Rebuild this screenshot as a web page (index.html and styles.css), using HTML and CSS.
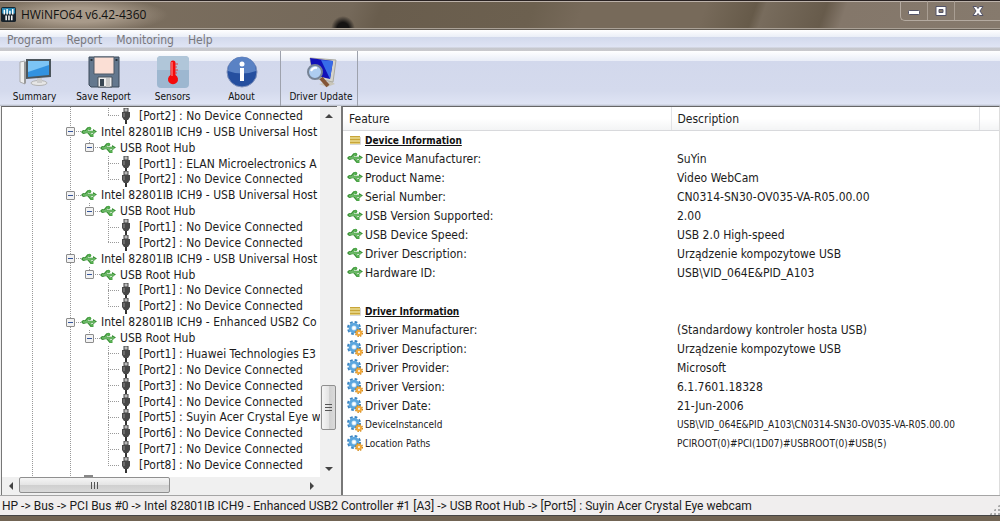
FILE: index.html
```html
<!DOCTYPE html>
<html lang="en">
<head>
    <meta charset="UTF-8">
    <meta name="viewport" content="width=device-width, initial-scale=1.0">
    <title>HWiNFO64 v6.42-4360</title>
    <link rel="stylesheet" href="styles.css">
</head>
<body>
    <!-- Shared icons -->
    <svg class="sprites" aria-hidden="true">
        <symbol id="usb" viewBox="0 0 16 12">
            <path d="M2 6h12M4 6l3-3.500h1.500M7 6l3 3.500h1.500" fill="none" stroke="#3b9137" stroke-width="2.600"/>
            <path d="M0 6l2-2 2.500.5v3L2 8z" fill="#3b9137"/>
            <path d="M12 3l4 2.500L12 8z" fill="#3b9137"/>
            <circle cx="8.500" cy="2.500" r="1.800" fill="#4aa545"/>
            <path d="M9.500 8h3v3h-3z" fill="#4aa545"/>
            <path d="M2 6h12M5 5.500l3-3M8 6.500l3 3" fill="none" stroke="#8ed488" stroke-width="1"/>
        </symbol>
        <symbol id="plug" viewBox="0 0 10 16">
            <path d="M3 0h4v4H3z" fill="#bbb" stroke="#444" stroke-width="1"/>
            <path d="M1 4h8v5l-2 3H3L1 9z" fill="#484848"/>
            <path d="M3 5v4" stroke="#909090"/>
            <path d="M4 12h2v4H4z" fill="#333"/>
        </symbol>
        <symbol id="gears" viewBox="0 0 16 16">
            <circle cx="7" cy="7" r="6" fill="none" stroke="#3c85c2" stroke-width="2" stroke-dasharray="2.700 2"/>
            <circle cx="7" cy="7" r="3.900" fill="#b9dcf5" stroke="#5ba6de" stroke-width="2.800"/>
            <circle cx="7" cy="7" r="1.800" fill="#fff"/>
            <circle cx="12" cy="12" r="3.200" fill="none" stroke="#cf8310" stroke-width="1.600" stroke-dasharray="1.500 1"/>
            <circle cx="12" cy="12" r="2" fill="#fff" stroke="#f2a93a" stroke-width="2"/>
        </symbol>
        <symbol id="list" viewBox="0 0 12 10">
            <path d="M1 1h10v8H1z" fill="#e3cf7c"/>
            <path d="M1 1.500h10M1 4.500h10M1 7.500h10" stroke="#c8a539"/>
            <path d="M1 9.500h10.500V2" fill="none" stroke="#d8d8d8"/>
        </symbol>
    </svg>

    <header class="titlebar">
        <svg class="app-icon" viewBox="0 0 16 16" aria-hidden="true">
            <rect width="16" height="16" rx="2" fill="#17212a"/>
            <path d="M1 1h14v6H1z" fill="#2484b0"/>
            <path d="M3.500 3v5M6.500 2v6M9.500 4v4M12.500 2v6M5.500 9v5M8.500 9v5M11.500 9v5" stroke="#fff" stroke-width="1.600"/>
        </svg>
        <h1>HWiNFO64 v6.42-4360</h1>
        <div class="window-controls">
            <button aria-label="Minimize"><svg viewBox="0 0 12 12"><rect x="0.500" y="5.500" width="11" height="4" rx="1" fill="#fff" stroke="#545468"/></svg></button>
            <button aria-label="Maximize"><svg viewBox="0 0 12 12"><path d="M1 1.500h10v9H1zM4 4.500v3h4v-3z" fill="#fff" fill-rule="evenodd" stroke="#545468"/></svg></button>
            <button class="close" aria-label="Close"><svg viewBox="0 0 12 12"><path d="M1 1.500h3.500L6 3.500l1.500-2H11L8 6l3 4.500H7.500L6 8.500l-1.500 2H1L4 6z" fill="#fff" stroke="#545468"/></svg></button>
        </div>
    </header>

    <nav class="menu">
        <button>Program</button>
        <button>Report</button>
        <button>Monitoring</button>
        <button>Help</button>
    </nav>

    <div class="toolbar">
        <button>
            <svg viewBox="0 0 32 32" aria-hidden="true">
                <path d="M1 6l5-1v23l-5-2z" fill="#eee" stroke="#a9a9a9"/>
                <path d="M5 6h2v21l-2 1z" fill="#999"/>
                <ellipse cx="20" cy="27" rx="8" ry="2.500" fill="#e6e6e6" stroke="#b2b2b2"/>
                <path d="M18 22h5v5h-5z" fill="#ccc"/>
                <path d="M7 3h25v18l-25 2z" fill="#4b555c"/>
                <path d="M9 5h21v14L9 21z" fill="#3292e0"/>
                <path d="M9 5h21v4L9 16z" fill="#7cc4f5"/>
            </svg>
            <span>Summary</span>
        </button>
        <button>
            <svg viewBox="0 0 32 32" aria-hidden="true">
                <path d="M1 1h30v30H3l-2-2z" fill="#64788e" stroke="#3d4b5a"/>
                <path d="M6 1h20v17H6z" fill="#fbdfd5" stroke="#4d5966"/>
                <path d="M2.500 3h2v2h-2zM27.500 3h2v2h-2z" fill="#25303a"/>
                <path d="M10 21h14v10H10z" fill="#eee" stroke="#48525d"/>
                <path d="M12 23h4v7h-4z" fill="#384653"/>
                <path d="M18 22h4v9h-4z" fill="#c8c8c8"/>
            </svg>
            <span>Save Report</span>
        </button>
        <button>
            <svg viewBox="0 0 32 32" aria-hidden="true">
                <rect x="0" y="0" width="32" height="32" rx="4" fill="#9db7d0"/>
                <path d="M0 4q0-4 4-4h24q4 0 4 4v10H0z" fill="#b0c6d9"/>
                <path d="M13.500 7a2.500 2.500 0 0 1 5 0v12a5 5 0 1 1-5 0z" fill="#f50a0a"/>
                <path d="M15 6v14" stroke="#ff9d9d"/>
                <path d="M18 8h3M18 11h2M18 14h3M18 17h2" stroke="#e24040"/>
            </svg>
            <span>Sensors</span>
        </button>
        <button>
            <svg viewBox="0 0 32 32" aria-hidden="true">
                <circle cx="16" cy="16" r="15" fill="#254f9f" stroke="#8193bc"/>
                <path d="M2 15a14 14 0 0 1 28 0q-14 5-28 0z" fill="#5a82c4"/>
                <circle cx="16" cy="8" r="2.500" fill="#fff"/>
                <path d="M14 12h4v13h-4z" fill="#fff"/>
            </svg>
            <span>About</span>
        </button>
        <button class="wide">
            <svg viewBox="0 0 32 32" aria-hidden="true">
                <path d="M26 25l-12 3 8 3 8-3z" fill="#c9c6b9"/>
                <path d="M5 2l26 2-3 22-20-4z" fill="#d5d4cc" stroke="#aaa9a0"/>
                <path d="M5 2l23 3-3 18-17-4z" fill="#1111b8"/>
                <path d="M16 4l12 1-3 18z" fill="#376ce8"/>
                <path d="M16 22l7 8" stroke="#845536" stroke-width="4"/>
                <circle cx="10" cy="16" r="7" fill="#aecdf0" stroke="#768395" stroke-width="2"/>
                <path d="M6 15q2-4 6-3" fill="none" stroke="#fff" stroke-width="2"/>
            </svg>
            <span>Driver Update</span>
        </button>
    </div>

    <main>
        <section class="tree-panel" aria-label="Devices">
            <ul class="tree">
                <li class="port last"><svg><use href="#plug"/></svg>[Port2] : No Device Connected</li>
                <li class="controller"><button aria-label="Collapse"></button><svg><use href="#usb"/></svg>Intel 82801IB ICH9 - USB Universal Host</li>
                <li class="hub"><button aria-label="Collapse"></button><svg><use href="#usb"/></svg>USB Root Hub</li>
                <li class="port"><svg><use href="#plug"/></svg>[Port1] : ELAN Microelectronics A</li>
                <li class="port last"><svg><use href="#plug"/></svg>[Port2] : No Device Connected</li>
                <li class="controller"><button aria-label="Collapse"></button><svg><use href="#usb"/></svg>Intel 82801IB ICH9 - USB Universal Host</li>
                <li class="hub"><button aria-label="Collapse"></button><svg><use href="#usb"/></svg>USB Root Hub</li>
                <li class="port"><svg><use href="#plug"/></svg>[Port1] : No Device Connected</li>
                <li class="port last"><svg><use href="#plug"/></svg>[Port2] : No Device Connected</li>
                <li class="controller"><button aria-label="Collapse"></button><svg><use href="#usb"/></svg>Intel 82801IB ICH9 - USB Universal Host</li>
                <li class="hub"><button aria-label="Collapse"></button><svg><use href="#usb"/></svg>USB Root Hub</li>
                <li class="port"><svg><use href="#plug"/></svg>[Port1] : No Device Connected</li>
                <li class="port last"><svg><use href="#plug"/></svg>[Port2] : No Device Connected</li>
                <li class="controller"><button aria-label="Collapse"></button><svg><use href="#usb"/></svg>Intel 82801IB ICH9 - Enhanced USB2 Co</li>
                <li class="hub"><button aria-label="Collapse"></button><svg><use href="#usb"/></svg>USB Root Hub</li>
                <li class="port"><svg><use href="#plug"/></svg>[Port1] : Huawei Technologies E3</li>
                <li class="port"><svg><use href="#plug"/></svg>[Port2] : No Device Connected</li>
                <li class="port"><svg><use href="#plug"/></svg>[Port3] : No Device Connected</li>
                <li class="port"><svg><use href="#plug"/></svg>[Port4] : No Device Connected</li>
                <li class="port"><svg><use href="#plug"/></svg>[Port5] : Suyin Acer Crystal Eye w</li>
                <li class="port"><svg><use href="#plug"/></svg>[Port6] : No Device Connected</li>
                <li class="port"><svg><use href="#plug"/></svg>[Port7] : No Device Connected</li>
                <li class="port last"><svg><use href="#plug"/></svg>[Port8] : No Device Connected</li>
            </ul>
            <div class="scroll vertical">
                <button class="arrow up" aria-label="Scroll up"></button>
                <div class="track"><div class="thumb"></div></div>
                <button class="arrow down" aria-label="Scroll down"></button>
            </div>
            <div class="scroll horizontal">
                <button class="arrow left" aria-label="Scroll left"></button>
                <div class="track"><div class="thumb"></div></div>
                <button class="arrow right" aria-label="Scroll right"></button>
            </div>
        </section>

        <section class="details" aria-label="Device details">
            <table>
                <thead>
                    <tr><th class="feature">Feature</th><th>Description</th><th class="rest"></th></tr>
                </thead>
                <tbody>
                    <tr class="group"><td><svg><use href="#list"/></svg><span>Device Information</span></td><td></td></tr>
                    <tr><td><svg><use href="#usb"/></svg>Device Manufacturer:</td><td>SuYin</td></tr>
                    <tr><td><svg><use href="#usb"/></svg>Product Name:</td><td>Video WebCam</td></tr>
                    <tr><td><svg><use href="#usb"/></svg>Serial Number:</td><td>CN0314-SN30-OV035-VA-R05.00.00</td></tr>
                    <tr><td><svg><use href="#usb"/></svg>USB Version Supported:</td><td>2.00</td></tr>
                    <tr><td><svg><use href="#usb"/></svg>USB Device Speed:</td><td>USB 2.0 High-speed</td></tr>
                    <tr><td><svg><use href="#usb"/></svg>Driver Description:</td><td>Urządzenie kompozytowe USB</td></tr>
                    <tr><td><svg><use href="#usb"/></svg>Hardware ID:</td><td>USB\VID_064E&amp;PID_A103</td></tr>
                    <tr><td></td><td></td></tr>
                    <tr class="group"><td><svg><use href="#list"/></svg><span>Driver Information</span></td><td></td></tr>
                    <tr><td><svg><use href="#gears"/></svg>Driver Manufacturer:</td><td>(Standardowy kontroler hosta USB)</td></tr>
                    <tr><td><svg><use href="#gears"/></svg>Driver Description:</td><td>Urządzenie kompozytowe USB</td></tr>
                    <tr><td><svg><use href="#gears"/></svg>Driver Provider:</td><td>Microsoft</td></tr>
                    <tr><td><svg><use href="#gears"/></svg>Driver Version:</td><td>6.1.7601.18328</td></tr>
                    <tr><td><svg><use href="#gears"/></svg>Driver Date:</td><td>21-Jun-2006</td></tr>
                    <tr class="small"><td><svg><use href="#gears"/></svg>DeviceInstanceId</td><td>USB\VID_064E&amp;PID_A103\CN0314-SN30-OV035-VA-R05.00.00</td></tr>
                    <tr class="small"><td><svg><use href="#gears"/></svg>Location Paths</td><td>PCIROOT(0)#PCI(1D07)#USBROOT(0)#USB(5)</td></tr>
                </tbody>
            </table>
        </section>
    </main>

    <footer class="statusbar">
        <span>HP -&gt; Bus -&gt; PCI Bus #0 -&gt; Intel 82801IB ICH9 - Enhanced USB2 Controller #1 [A3] -&gt; USB Root Hub -&gt; [Port5] : Suyin Acer Crystal Eye webcam</span>
        <i class="grip"></i>
    </footer>
</body>
</html>
```
FILE: styles.css
```css
* {
    margin: 0;
    padding: 0;
    box-sizing: border-box;
}

body {
    display: flex;
    flex-direction: column;
    height: 100vh;
    overflow: hidden;
    font-family: 'DejaVu Sans Condensed', 'DejaVu Sans', sans-serif;
    font-size: 12px;
    color: #1c1c1c;
    background: #6d6050;
    border-bottom: 5px solid #716453;
}

button {
    border: none;
    background: none;
    font: inherit;
    color: inherit;
}

svg {
    flex: none;
}

.sprites {
    display: none;
}

/* Title bar */
.titlebar {
    flex: none;
    display: flex;
    align-items: center;
    height: 30px;
    padding: 0 0 2px 1px;
    border-top: 1px solid #292222;
    border-bottom: 1px solid #655e55;
    background:
        radial-gradient(ellipse 12px 13px at 343px 28px, #151312 50%, transparent),
        radial-gradient(ellipse 90px 18px at 78px 14px, #a89a8a 40%, transparent),
        linear-gradient(110deg, #7d7060 0%, #75695a 35%, #695d4d 38%, #6c604f 53%, #776a5a 58%, #776a5a 70%, #665a49 75%, #786c5d 76%, #675b4b 82%, #84776a 84%, #867a6d 100%);
    box-shadow: inset 0 1px #bcb2aa, inset 0 -1px #aaa196;
}

.app-icon {
    width: 15px;
    height: 15px;
}

.titlebar h1 {
    margin-left: 5px;
    font: 12px 'Open Sans', sans-serif;
    color: #111;
}

.window-controls {
    display: flex;
    align-self: flex-start;
    margin-left: auto;
    height: 20px;
    border: 1px solid #b4aaa0;
    border-top: none;
    border-right: none;
    border-radius: 0 0 0 5px;
}

.window-controls button {
    display: flex;
    align-items: center;
    justify-content: center;
    width: 27px;
    border-right: 1px solid #a99e93;
}

.window-controls .close {
    width: 45px;
    border: none;
}

.window-controls svg {
    width: 12px;
    height: 12px;
}

/* Menu and toolbar */
.menu {
    flex: none;
    display: flex;
    gap: 14px;
    height: 21px;
    padding: 0 0 2px 7px;
    color: #78787c;
    background: linear-gradient(#fff, #eaeef7 7px, #d2d9ec 7px, #dfe4f4 17px, #c6c8cf 18px, #c9c9cc);
}

.toolbar {
    flex: none;
    display: flex;
    height: 55px;
    font-size: 10px;
    color: #111;
    background: linear-gradient(#fff, #e9edf7 10px, #d2d8ec 10px, #d4daed 40px, #dfe4f4 53px, #b3b8c4);
}

.toolbar button {
    display: flex;
    flex-direction: column;
    align-items: center;
    gap: 3px;
    width: 69px;
    padding-top: 5px;
    white-space: nowrap;
}

.toolbar .wide {
    width: 78px;
    margin-left: 4px;
    padding-left: 4px;
    border-left: 1px solid #9ea2ad;
    border-right: 1px solid #9ea2ad;
}

.toolbar svg {
    width: 32px;
    height: 32px;
}

/* Panels */
main {
    flex: 1;
    display: flex;
    gap: 4px;
    min-height: 0;
    padding-left: 1px;
    background: #f0f0f0;
}

.tree-panel {
    flex: none;
    display: grid;
    grid-template: minmax(0, 1fr) 18px / minmax(0, 1fr) 17px;
    width: 336px;
    border-top: 1px solid #666;
    border-left: 1px solid #777;
}

/* dark patch at the bottom is the top of the next controller's icon */
.tree {
    display: grid;
    grid-auto-rows: 1fr;
    padding: 1px 0 4px;
    overflow: hidden;
    list-style: none;
    background:
        linear-gradient(#888, #888) 82px 100% / 9px 2px no-repeat,
        repeating-linear-gradient(#999 0 1px, transparent 1px 2px) 30px 0 / 1px 100% no-repeat,
        repeating-linear-gradient(#999 0 1px, transparent 1px 2px) 68px 0 / 1px 100% no-repeat,
        #fff;
}

.tree li {
    display: flex;
    align-items: center;
    min-height: 0;
    white-space: nowrap;
}

.tree button {
    flex: none;
    width: 9px;
    height: 9px;
    border: 1px solid #8c8c8c;
    border-radius: 1px;
    background: linear-gradient(#35559c, #35559c) center / 5px 1px no-repeat, #f2f2f2;
}

.tree svg {
    width: 16px;
    height: 12px;
    margin: 0 4px 0 6px;
}

.tree .controller {
    padding-left: 64px;
    background: repeating-linear-gradient(90deg, #999 0 1px, transparent 1px 2px) 74px 50% / 5px 1px no-repeat;
}

.tree .hub {
    padding-left: 83px;
    background:
        repeating-linear-gradient(90deg, #999 0 1px, transparent 1px 2px) 93px 50% / 5px 1px no-repeat,
        repeating-linear-gradient(#999 0 1px, transparent 1px 2px) 87px 0 / 1px 4px no-repeat;
}

.tree .port {
    padding-left: 119px;
    background:
        repeating-linear-gradient(90deg, #999 0 1px, transparent 1px 2px) 106px 50% / 11px 1px no-repeat,
        repeating-linear-gradient(#999 0 1px, transparent 1px 2px) 106px 0 / 1px 100% no-repeat;
}

.tree .last {
    background-size: 11px 1px, 1px 50%;
}

.tree .port svg {
    width: 10px;
    height: 16px;
    margin: 0 8px 0 0;
}

/* Scroll bars */
.scroll {
    display: flex;
    background: #f0f0f0;
}

.vertical {
    flex-direction: column;
}

.horizontal {
    padding-bottom: 2px;
}

.arrow {
    display: flex;
    align-items: center;
    justify-content: center;
    width: 17px;
    height: 17px;
}

.arrow::before {
    content: '';
    border: 4px solid transparent;
}

.up::before {
    border-top: none;
    border-bottom-color: #444;
}

.down::before {
    border-bottom: none;
    border-top-color: #444;
}

.left::before {
    border-left: none;
    border-right-color: #444;
}

.right::before {
    border-right: none;
    border-left-color: #444;
}

.track {
    flex: 1;
    display: flex;
}

.vertical .track {
    flex-direction: column;
    justify-content: flex-end;
    padding: 0 1px 30px;
}

.thumb {
    border: 1px solid #8f8f8f;
    border-radius: 2px;
}

.vertical .thumb {
    height: 45px;
    background:
        repeating-linear-gradient(#555 0 1px, transparent 1px 3px) center / 7px 7px no-repeat,
        linear-gradient(90deg, #f5f5f5, #e4e4e4 50%, #cfcfcf 50%, #dadada);
}

.horizontal .thumb {
    width: 53%;
    background:
        repeating-linear-gradient(90deg, #555 0 1px, transparent 1px 3px) center / 7px 7px no-repeat,
        linear-gradient(#f5f5f5, #e4e4e4 50%, #cfcfcf 50%, #dadada);
}

/* Details */
.details {
    flex: 1;
    min-width: 0;
    border-top: 1px solid #666;
    border-left: 2px solid #777;
    border-right: 1px solid #ddd;
    background: #fff;
}

table {
    width: 100%;
    table-layout: fixed;
    border-collapse: collapse;
}

th {
    height: 23px;
    padding: 1px 0 0 6px;
    border-right: 1px solid #e2e3e6;
    border-bottom: 1px solid #d8d9dc;
    background: linear-gradient(#fff 50%, #f3f4f5);
    font-weight: normal;
    text-align: left;
}

.feature {
    width: 50%;
}

.rest {
    width: 20px;
    border-right: none;
}

td {
    height: 19px;
    padding-left: 6px;
    line-height: 18px;
    white-space: nowrap;
}

td svg {
    width: 16px;
    height: 16px;
    margin-right: 2px;
    vertical-align: top;
}

td:first-child {
    padding-left: 4px;
}

.group span {
    font-size: 10px;
    font-weight: bold;
    text-decoration: underline;
    color: #111;
}

.group svg {
    height: 10px;
    margin-top: 4px;
}

.small {
    font-size: 10px;
}

/* Status bar */
.statusbar {
    flex: none;
    display: flex;
    align-items: center;
    justify-content: space-between;
    height: 21px;
    padding-left: 2px;
    border-top: 1px solid #a5a5a5;
    border-bottom: 1px solid #444;
    background: #f0eeee;
    font-family: Roboto, sans-serif;
    white-space: nowrap;
}

.grip {
    align-self: flex-end;
    width: 11px;
    height: 11px;
    background: radial-gradient(#aaa 1px, transparent 1px) 0 0 / 4px 4px;
    clip-path: polygon(100% 0, 100% 100%, 0 100%);
}
```
